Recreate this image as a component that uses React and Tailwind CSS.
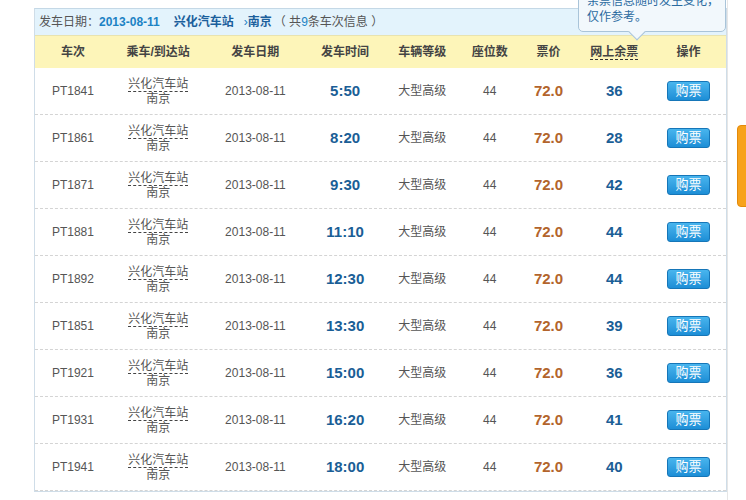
const rows=[["PT1841","5:50","36"],["PT1861","8:20","28"],["PT1871","9:30","42"],["PT1881","11:10","44"],["PT1892","12:30","44"],["PT1851","13:30","39"],["PT1921","15:00","36"],["PT1931","16:20","41"],["PT1941","18:00","40"]];
const W=["w-[76px]","w-[95px]","w-[100px]","w-[80px]","w-[75px]","w-[60px]","w-[58px]","w-[74px]","w-[75px]"];
export default function App(){
const f={fontFamily:'"Liberation Sans","Noto Sans CJK SC",sans-serif'};
return <div className="relative w-[746px] h-[500px] bg-white overflow-hidden" style={f}>
<div className="absolute left-[737px] top-[125px] w-[14px] h-[82px] rounded-l-[4px] bg-[#f7a21b] border border-[#e48a0a]"></div>
<div className="absolute left-[727px] top-0 w-[1px] h-[500px] bg-[#e6e6e6]"></div>
<div className="ml-[34px] mt-[8px] w-[693px] border border-[#cfdde8] border-t-[#c4d8e6]">
<div className="h-[26px] bg-[#e3f3fc] flex items-center pl-[4px] text-[12px] text-[#555]">发车日期：<b className="text-[#1b82c4]">2013-08-11</b><b className="ml-[14px] text-[#1b5f9c]">兴化汽车站</b><span className="ml-[10px] text-[#1b82c4]">›</span><b className="text-[#1b5f9c]">南京</b><span className="ml-[2px]">（ 共<span className="text-[#1b82c4]">9</span>条车次信息 ）</span></div>
<div className="flex h-[33px] items-center bg-[#fdf5b9] border-t border-[#e8e3b0] text-[12px] font-bold text-[#444]">
{["车次","乘车/到达站","发车日期","发车时间","车辆等级","座位数","票价","网上余票","操作"].map((t,i)=><div key={i} className={W[i]+" text-center"}>{i===7?<span className="border-b border-dashed border-[#333]">{t}</span>:t}</div>)}
</div>
{rows.map((r,k)=><div key={k} className="flex h-[47px] items-center border-b border-dashed border-[#d4d4d4] text-[12px] text-[#555]">
<div className={W[0]+" text-center"}>{r[0]}</div>
<div className={W[1]+" flex flex-col items-center leading-[14px]"}><span className="border-b border-dashed border-[#444]">兴化汽车站</span><span>南京</span></div>
<div className={W[2]+" text-center"}>2013-08-11</div>
<div className={W[3]+" text-center text-[15px] font-bold text-[#1a5e96]"}>{r[1]}</div>
<div className={W[4]+" text-center"}>大型高级</div>
<div className={W[5]+" text-center"}>44</div>
<div className={W[6]+" text-center text-[15px] font-bold text-[#b3642c]"}>72.0</div>
<div className={W[7]+" text-center text-[15px] font-bold text-[#1a5e96]"}>{r[2]}</div>
<div className={W[8]+" flex justify-center"}><div className="w-[43px] h-[20px] rounded-[3px] bg-gradient-to-b from-[#48b5ee] to-[#1c8ed6] border border-[#1676b8] text-white text-[13px] flex items-center justify-center">购票</div></div>
</div>)}
</div>
<div className="absolute left-[578px] top-[-14px] w-[148px] h-[46px] bg-[#f2f8fc] border border-[#a9c4d9] rounded-[5px] text-[12px] text-[#2a6aa0] px-[8px] pt-[6px] leading-[16px] whitespace-nowrap">余票信息随时发生变化，<br/>仅作参考。
<div className="absolute left-[52px] bottom-[-7px] w-[12px] h-[12px] bg-[#f2f8fc] border-r border-b border-[#a9c4d9] rotate-45"></div></div>
</div>}
